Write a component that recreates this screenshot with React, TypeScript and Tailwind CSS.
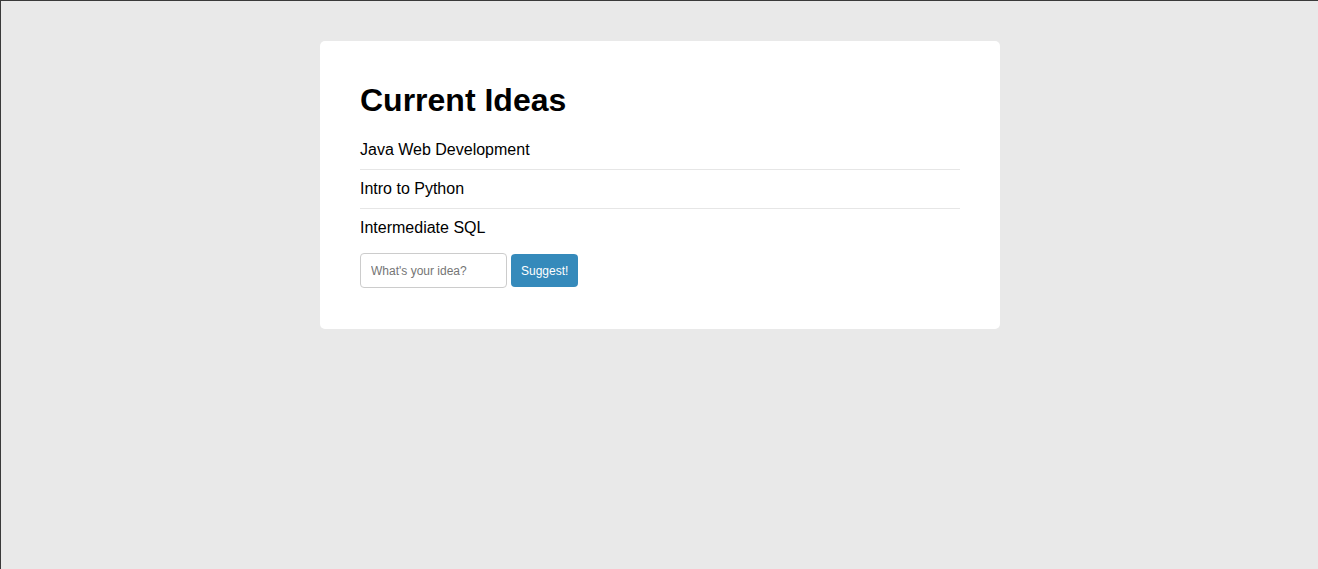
import React from 'react';

const ideas = ['Java Web Development', 'Intro to Python', 'Intermediate SQL'];

export default function App() {
  return (
    <div className="min-h-[569px] bg-[#e9e9e9] border-t border-l border-[#3a3a3a] font-['Liberation_Sans',Arial,sans-serif] text-black">
      <div className="pt-[40px] pl-[319px]">
        <div className="w-[680px] bg-white rounded-[5px] px-[40px] pt-[40px] pb-[41px]">
          <h1 className="text-[32px] leading-[39px] font-bold mb-[11px]">Current Ideas</h1>
          <ul>
            {ideas.map((idea, i) => (
              <li
                key={idea}
                className={`text-[16px] leading-[18px] py-[10px] ${i < ideas.length - 1 ? 'border-b border-[#e6e6e6]' : ''}`}
              >
                {idea}
              </li>
            ))}
          </ul>
          <form className="flex items-center gap-[4px] mt-[6px]" onSubmit={(e) => e.preventDefault()}>
            <input
              type="text"
              placeholder="What's your idea?"
              className="w-[147px] h-[35px] border border-[#cccccc] rounded-[4px] px-[10px] text-[12px] placeholder:text-[#757575] outline-none"
            />
            <button
              type="submit"
              className="h-[33px] px-[10px] bg-[#358abb] text-white text-[12px] rounded-[4px]"
            >
              Suggest!
            </button>
          </form>
        </div>
      </div>
    </div>
  );
}
